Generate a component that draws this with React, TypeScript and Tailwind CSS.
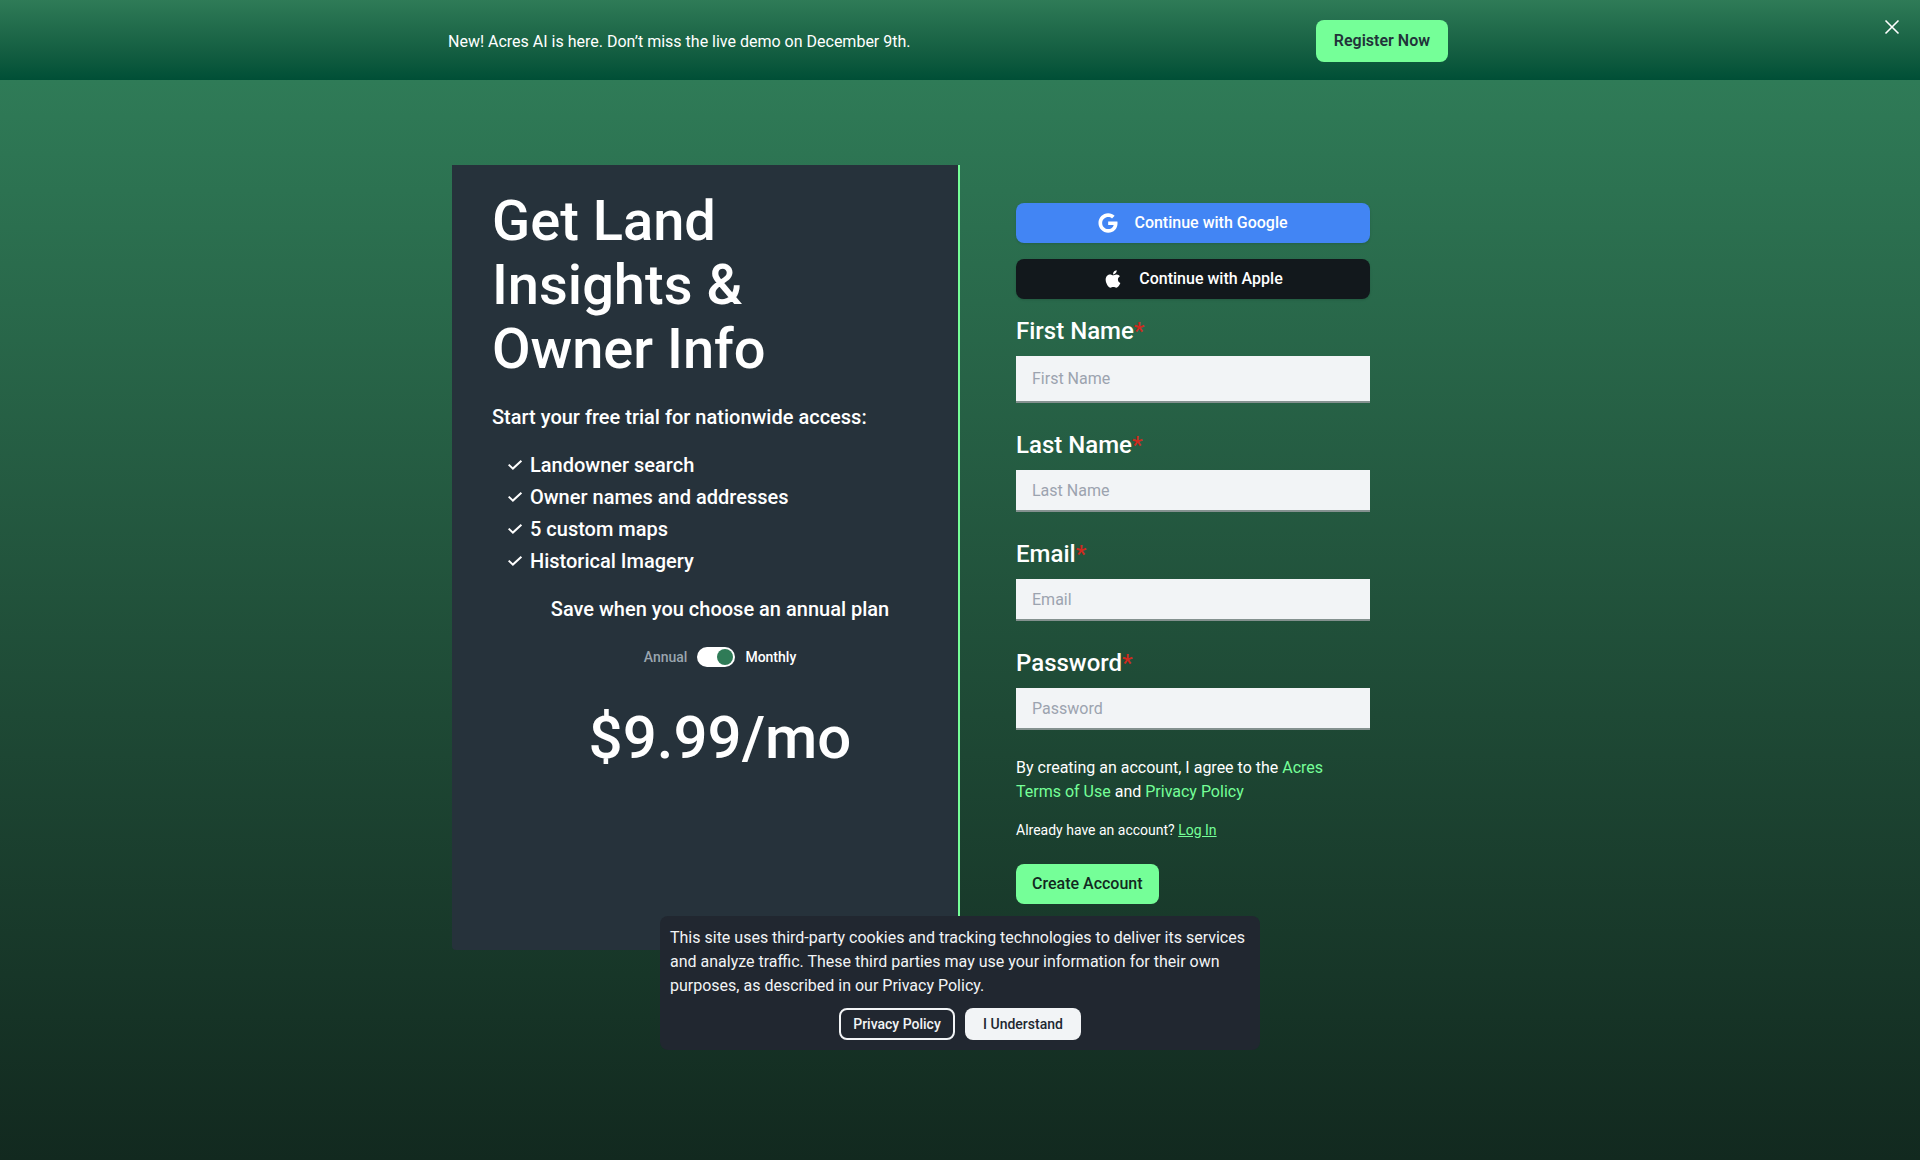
import {useState} from 'react';
import type {ReactNode} from 'react';
import {FaApple, FaGoogle} from 'react-icons/fa';

const features = [
  'Landowner search',
  'Owner names and addresses',
  '5 custom maps',
  'Historical Imagery',
];

interface FieldProps {
  id: string;
  label: string;
  type?: string;
  inputClassName?: string;
}

function Field({id, label, type = 'text', inputClassName = 'h-[42px]'}: FieldProps) {
  return (
    <div className="mb-[26px]">
      <label htmlFor={id} className="mb-[9px] block text-2xl leading-8 font-medium">
        {label}
        <span className="text-[#cf2a1e]">*</span>
      </label>
      <input
        id={id}
        name={id}
        type={type}
        placeholder={label}
        className={`block w-full border-b-2 border-[#84918f] bg-[#f2f4f6] px-4 text-base text-gray-900 outline-none placeholder:text-[#9ca3af] ${inputClassName}`}
      />
    </div>
  );
}

interface SocialButtonProps {
  icon: ReactNode;
  className: string;
  children: ReactNode;
}

function SocialButton({icon, className, children}: SocialButtonProps) {
  return (
    <button
      type="button"
      className={`mb-4 flex h-10 w-full items-center justify-center gap-4 rounded-lg font-medium shadow-sm ${className}`}
    >
      {icon}
      {children}
    </button>
  );
}

function CheckIcon() {
  return (
    <svg viewBox="0 0 20 20" className="size-5" fill="none" stroke="currentColor" strokeWidth="2">
      <path d="M2.7 9.6l4.2 4 8.5-7.9" />
    </svg>
  );
}

function Banner({onClose}: {onClose: () => void}) {
  return (
    <div className="relative bg-linear-to-b from-[#2f7b57] to-[#004f36] pr-6">
      <div className="mx-auto flex h-20 max-w-[1000px] items-center justify-between pt-0.5">
        <p className="pt-0.5">New! Acres AI is here. Don’t miss the live demo on December 9th.</p>
        <a
          href="#register"
          className="flex h-[42px] items-center rounded-lg bg-[#75ff98] px-[18px] font-semibold text-[#22343a]"
        >
          Register Now
        </a>
      </div>
      <button
        type="button"
        aria-label="Close"
        onClick={onClose}
        className="absolute top-[15px] right-4 p-1"
      >
        <svg viewBox="0 0 16 16" className="size-4" fill="none" stroke="currentColor" strokeWidth="1.6">
          <path d="M1.5 1.5l13 13M14.5 1.5l-13 13" />
        </svg>
      </button>
    </div>
  );
}

function PlanPanel() {
  const [monthly, setMonthly] = useState(true);

  return (
    <section className="rounded-bl-sm border-r-2 border-[#75ff98] bg-[#26323b] pt-6 pr-2.5 pl-10">
      <h1 className="max-w-[320px] text-[56px] leading-16 font-medium">
        Get Land Insights & Owner Info
      </h1>
      <p className="mt-5 text-xl leading-8 font-medium">
        Start your free trial for nationwide access:
      </p>
      <ul className="mt-4 pl-3.5 text-xl leading-8 font-medium">
        {features.map((feature) => (
          <li key={feature} className="flex items-center gap-1">
            <CheckIcon />
            {feature}
          </li>
        ))}
      </ul>
      <div className="flex flex-col items-center">
        <p className="mt-4 text-xl leading-8 font-medium">Save when you choose an annual plan</p>
        <div className="mt-[22px] flex items-center gap-2.5 text-sm font-medium">
          <span className={monthly ? 'text-[#9aa5ae]' : 'text-white'}>Annual</span>
          <button
            type="button"
            role="switch"
            aria-checked={monthly}
            aria-label="Monthly billing"
            onClick={() => setMonthly(!monthly)}
            className={`flex h-5 w-[38px] items-center rounded-full bg-white px-0.5 ${monthly ? 'justify-end' : 'justify-start'}`}
          >
            <span className="size-4 rounded-full bg-[#2f7b57]" />
          </button>
          <span className={monthly ? 'text-white' : 'text-[#9aa5ae]'}>Monthly</span>
        </div>
        <p className="mt-9 text-6xl leading-[70px] font-medium">$9.99/mo</p>
      </div>
    </section>
  );
}

function SignUpForm() {
  return (
    <form className="pt-[38px] pb-[46px] pl-14" onSubmit={(e) => e.preventDefault()}>
      <div className="max-w-[354px]">
        <SocialButton icon={<FaGoogle className="size-5" />} className="bg-[#4285f4]">
          Continue with Google
        </SocialButton>
        <SocialButton icon={<FaApple className="size-5" />} className="bg-[#12181c]">
          Continue with Apple
        </SocialButton>
        <Field id="first-name" label="First Name" inputClassName="h-[47px]" />
        <Field id="last-name" label="Last Name" />
        <Field id="email" label="Email" type="email" />
        <Field id="password" label="Password" type="password" />
        <p className="max-w-[340px]">
          By creating an account, I agree to the{' '}
          <a href="#terms" className="text-[#75ff98]">Acres Terms of Use</a> and{' '}
          <a href="#privacy" className="text-[#75ff98]">Privacy Policy</a>
        </p>
        <p className="mt-4 text-sm">
          Already have an account?{' '}
          <a href="#login" className="text-[#75ff98] underline">Log In</a>
        </p>
        <button
          type="submit"
          className="mt-6 h-10 rounded-lg bg-[#75ff98] px-4 font-medium text-[#12291f]"
        >
          Create Account
        </button>
      </div>
    </form>
  );
}

function CookieNotice({onAccept}: {onAccept: () => void}) {
  return (
    <div className="fixed bottom-[110px] left-1/2 w-full max-w-[600px] -translate-x-1/2 rounded-lg bg-[#212730] p-2.5 text-[#f2f4f6]">
      <p>
        This site uses third-party cookies and tracking technologies to deliver its services and
        analyze traffic. These third parties may use your information for their own purposes, as
        described in our Privacy Policy.
      </p>
      <div className="mt-2.5 flex justify-center gap-2.5 text-sm font-medium">
        <a
          href="#privacy"
          className="flex h-8 w-[116px] items-center justify-center rounded-lg border-2 border-[#f2f4f6]"
        >
          Privacy Policy
        </a>
        <button
          type="button"
          onClick={onAccept}
          className="h-8 w-[116px] rounded-lg bg-[#f2f4f6] text-[#212730]"
        >
          I Understand
        </button>
      </div>
    </div>
  );
}

export default function App() {
  const [showBanner, setShowBanner] = useState(true);
  const [showCookies, setShowCookies] = useState(true);

  return (
    <div className="flex min-h-screen flex-col font-[Roboto,sans-serif] text-base text-white">
      {showBanner && <Banner onClose={() => setShowBanner(false)} />}
      <main className="grow bg-linear-to-b from-[#2f7b57] to-[#12291f] pt-[85px] pb-20">
        <div className="mx-auto grid max-w-[1016px] grid-cols-2">
          <PlanPanel />
          <SignUpForm />
        </div>
      </main>
      {showCookies && <CookieNotice onAccept={() => setShowCookies(false)} />}
    </div>
  );
}
